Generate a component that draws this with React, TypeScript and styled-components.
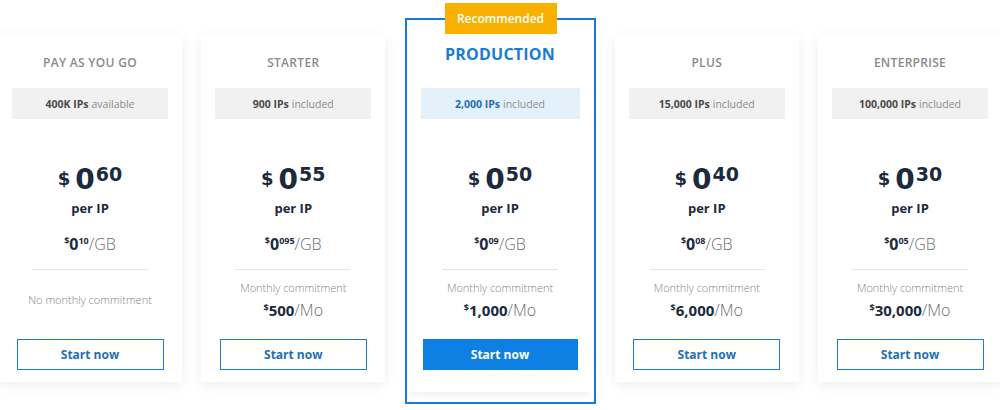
import React from "react"
import styled, { createGlobalStyle, css } from "styled-components"

const GlobalStyle = createGlobalStyle`
  body {
    margin: 0;
    background: #ffffff;
    font-family: "Open Sans", "Liberation Sans", sans-serif;
    overflow: hidden;
  }
`

const Row = styled.div`
  display: flex;
  justify-content: space-between;
  align-items: flex-start;
  width: 1004px;
  margin-left: -2px;
  height: 410px;
`

const Card = styled.div`
  width: 184px;
  margin-top: 35px;
  background: #fff;
  box-shadow: 0 3px 12px rgba(0, 0, 0, 0.07);
  display: flex;
  flex-direction: column;
  align-items: center;
  padding-bottom: 12px;
`

const FeaturedFrame = styled.div`
  position: relative;
  width: 191px;
  box-sizing: border-box;
  margin-top: 18px;
  border: 2px solid #1a7ad4;
  padding-bottom: 10px;
`

const Badge = styled.div`
  position: absolute;
  top: -17px;
  left: 38px;
  width: 112px;
  height: 31px;
  background: #f8b100;
  color: #fff;
  font-size: 12px;
  font-weight: 600;
  display: flex;
  align-items: center;
  justify-content: center;
`

const FeaturedCard = styled(Card)`
  width: auto;
  margin-top: 0;
  padding-bottom: 22px;
  box-shadow: 0 6px 8px -4px rgba(0, 0, 0, 0.08);
`

const Title = styled.div<{ $featured?: boolean }>`
  margin-top: 20px;
  height: 16px;
  line-height: 16px;
  font-size: 12px;
  font-weight: 600;
  color: #8a8a8a;
  letter-spacing: 0.3px;
  ${(p) =>
    p.$featured &&
    css`
      margin-top: 24px;
      height: 20px;
      line-height: 20px;
      font-size: 16px;
      font-weight: 700;
      color: #1a7ad4;
      letter-spacing: 0.2px;
    `}
`

const Chip = styled.div<{ $featured?: boolean }>`
  align-self: stretch;
  margin: 17px 14px 0;
  height: 31px;
  display: flex;
  align-items: center;
  justify-content: center;
  gap: 3px;
  font-size: 10.5px;
  background: ${(p) => (p.$featured ? "#e4f1fa" : "#f1f1f1")};
  color: #8c8c8c;
  ${(p) =>
    p.$featured &&
    css`
      margin-top: 24px;
    `}
  b {
    font-weight: 700;
    color: ${(p) => (p.$featured ? "#1f6fb5" : "#4a4a4a")};
  }
`

const PriceRow = styled.div`
  margin-top: 47px;
  display: flex;
  align-items: flex-start;
  color: #1b2a3d;
  font-family: "DejaVu Sans", "Open Sans", sans-serif;
  font-weight: 700;
  line-height: 1;
`

const Dollar = styled.span`
  font-size: 18px;
  margin-top: 4px;
  margin-right: 5px;
`

const Whole = styled.span`
  font-size: 28px;
`

const Cents = styled.span`
  font-size: 19px;
  margin-top: -1px;
  margin-left: 1px;
`

const PerIp = styled.div`
  margin-top: 6px;
  font-size: 13px;
  font-weight: 700;
  color: #1b2a3d;
  line-height: 16px;
`

const GbRow = styled.div`
  margin-top: 18px;
  display: flex;
  align-items: flex-start;
  line-height: 20px;
  height: 20px;
  color: #1b2a3d;
`

const Tiny = styled.span`
  font-size: 9px;
  font-weight: 700;
  line-height: 12px;
  margin-top: 1px;
`

const GbWhole = styled.span`
  font-size: 16px;
  font-weight: 700;
`

const Unit = styled.span`
  font-size: 16px;
  font-weight: 300;
  color: #6d6d6d;
`

const Divider = styled.div`
  margin-top: 15px;
  width: 116px;
  height: 1px;
  background: #e4e4e4;
`

const Commit = styled.div`
  height: 60px;
  display: flex;
  flex-direction: column;
  align-items: center;
  justify-content: center;
  gap: 6px;
`

const CommitLabel = styled.div`
  font-size: 11px;
  line-height: 14px;
  color: #858585;
  font-weight: 300;
`

const Monthly = styled.div`
  display: flex;
  align-items: flex-start;
  height: 18px;
  line-height: 18px;
  color: #1b2a3d;
`

const MonthlyAmount = styled.span`
  font-size: 15px;
  font-weight: 700;
`

const Button = styled.button<{ $primary?: boolean }>`
  margin-top: 9px;
  width: 147px;
  height: 31px;
  box-sizing: border-box;
  font-family: inherit;
  font-size: 12px;
  font-weight: 700;
  cursor: pointer;
  border: 1.5px solid #1f7ccc;
  background: #fff;
  color: #1f6fb5;
  ${(p) =>
    p.$primary &&
    css`
      width: 155px;
      background: #0f80e3;
      border-color: #0f80e3;
      color: #fff;
    `}
`

type Plan = {
  name: string
  ips: string
  ipsNote: string
  cents: string
  gbCents: string
  monthly?: string
  featured?: boolean
}

const plans: Plan[] = [
  { name: "PAY AS YOU GO", ips: "400K IPs", ipsNote: "available", cents: "60", gbCents: "10" },
  { name: "STARTER", ips: "900 IPs", ipsNote: "included", cents: "55", gbCents: "095", monthly: "500" },
  { name: "PRODUCTION", ips: "2,000 IPs", ipsNote: "included", cents: "50", gbCents: "09", monthly: "1,000", featured: true },
  { name: "PLUS", ips: "15,000 IPs", ipsNote: "included", cents: "40", gbCents: "08", monthly: "6,000" },
  { name: "ENTERPRISE", ips: "100,000 IPs", ipsNote: "included", cents: "30", gbCents: "05", monthly: "30,000" },
]

const PlanBody: React.FC<{ plan: Plan }> = ({ plan }) => (
  <>
    <Title $featured={plan.featured}>{plan.name}</Title>
    <Chip $featured={plan.featured}>
      <b>{plan.ips}</b> {plan.ipsNote}
    </Chip>
    <PriceRow>
      <Dollar>$</Dollar>
      <Whole>0</Whole>
      <Cents>{plan.cents}</Cents>
    </PriceRow>
    <PerIp>per IP</PerIp>
    <GbRow>
      <Tiny>$</Tiny>
      <GbWhole>0</GbWhole>
      <Tiny>{plan.gbCents}</Tiny>
      <Unit>/GB</Unit>
    </GbRow>
    <Divider />
    <Commit>
      {plan.monthly ? (
        <>
          <CommitLabel>Monthly commitment</CommitLabel>
          <Monthly>
            <Tiny>$</Tiny>
            <MonthlyAmount>{plan.monthly}</MonthlyAmount>
            <Unit>/Mo</Unit>
          </Monthly>
        </>
      ) : (
        <CommitLabel>No monthly commitment</CommitLabel>
      )}
    </Commit>
    <Button $primary={plan.featured}>Start now</Button>
  </>
)

const App: React.FC = () => (
  <>
    <GlobalStyle />
    <Row>
      {plans.map((plan) =>
        plan.featured ? (
          <FeaturedFrame key={plan.name}>
            <Badge>Recommended</Badge>
            <FeaturedCard>
              <PlanBody plan={plan} />
            </FeaturedCard>
          </FeaturedFrame>
        ) : (
          <Card key={plan.name}>
            <PlanBody plan={plan} />
          </Card>
        )
      )}
    </Row>
  </>
)

export default App
